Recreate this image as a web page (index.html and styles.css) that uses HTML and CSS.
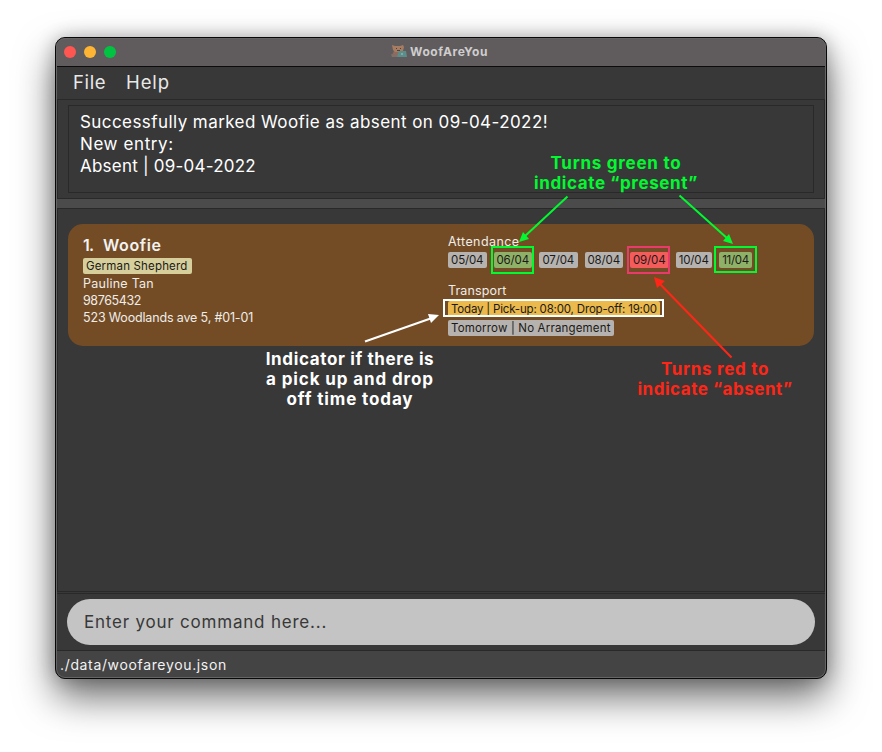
FILE: index.html
```html
<!DOCTYPE html>
<html lang="en">
<head>
<meta charset="utf-8">
<title>WoofAreYou</title>
<link rel="stylesheet" href="styles.css">
</head>
<body>
<main class="window">
  <header class="titlebar">
    <span class="light close"></span><span class="light minimise"></span><span class="light maximise"></span>
    <div class="title">
      <svg class="logo" width="16" height="14" viewBox="0 0 16 14">
        <path d="M3 7h5l1 5H3L1 11z" fill="#8f6b5d"/>
        <path d="M1 1l3 1h5l3-1 1 2-1 4-3 1H4L2 6z" fill="#a67c63"/>
        <path d="M0 10l3 1 3-1v3H1z" fill="#81706a"/>
        <path d="M5 4h1v1H5zM9 4h1v1H9zM6 6h3v1H6z" fill="#4d4140"/>
        <path d="M8 7h7l1 6H6z" fill="#5b8d8b"/>
        <path d="M10 9h2v2h-2z" fill="#80aaa6"/>
      </svg>
      <span class="t-title">WoofAreYou</span>
    </div>
  </header>
  <nav class="menu"><span class="t-file">File</span><span class="t-help">Help</span></nav>
  <section class="result-pane">
    <div class="result">
      <div class="t-success">Successfully marked Woofie as absent on 09-04-2022!</div>
      <div class="t-entry">New entry:</div>
      <div class="t-absent">Absent | 09-04-2022</div>
    </div>
  </section>
  <div class="divider"></div>
  <section class="list">
    <article class="card">
      <div class="pet">
        <h1><span class="t-num">1.</span><span class="t-name">Woofie</span></h1>
        <div class="chip breed">German Shepherd</div>
        <div class="line t-owner">Pauline Tan</div>
        <div class="line t-phone">98765432</div>
        <div class="line t-address">523 Woodlands ave 5, #01-01</div>
      </div>
      <div class="schedule">
        <div class="label t-attendance">Attendance</div>
        <div class="days">
          <span class="chip day">05/04</span><span class="chip day present">06/04</span><span class="chip day">07/04</span><span class="chip day">08/04</span><span class="chip day missed">09/04</span><span class="chip day d10">10/04</span><span class="chip day present d11">11/04</span>
        </div>
        <div class="label transport">Transport</div>
        <div class="chip today">Today | Pick-up: 08:00, Drop-off: 19:00</div>
        <div class="chip tomorrow">Tomorrow | No Arrangement</div>
      </div>
    </article>
  </section>
  <section class="command"><div class="field">Enter your command here...</div></section>
  <footer class="status">./data/woofareyou.json</footer>
</main>

<svg class="overlay" width="882" height="752" viewBox="0 0 882 752" fill="none">
  <g stroke-width="2">
    <path d="M492 247h41v26h-41zM715 247h41v25h-41z" stroke="#00f92f"/>
    <path d="M628 247h41v26h-41z" stroke="#e93a6c"/>
    <path d="M444 300h219v16H444z" stroke="#fff"/>
    <path d="M567.500 196.500L524 237M679.500 195.500L728 239" stroke="#00f92f"/>
    <path d="M731.500 357.500L658 282" stroke="#ff2617"/>
    <path d="M365 341.500L432 318" stroke="#fff"/>
  </g>
  <path d="M519 242L523 232L529 239zM733 244L723 241L729 234z" fill="#00f92f"/>
  <path d="M654 277L665 281L657 288z" fill="#ff2617"/>
  <path d="M439 315L431 323L428 314z" fill="#fff"/>
</svg>
<div class="note note-present"><div class="n1">Turns green to</div><div class="n2">indicate “present”</div></div>
<div class="note note-absent"><div class="n3">Turns red to</div><div class="n4">indicate “absent”</div></div>
<div class="note note-today"><div class="n5">Indicator if there is</div><div class="n6">a pick up and drop</div><div class="n7">off time today</div></div>
</body>
</html>
```
FILE: styles.css
```css
* { box-sizing: border-box; }
body { margin: 0; width: 882px; height: 752px; overflow: hidden; background: #fff; font-family: Inter, "Open Sans", sans-serif; padding: 37px 55px; position: relative; }
.window { width: 772px; height: 642px; border: 1px solid #080808; border-radius: 10px; background: #383838; overflow: hidden; display: flex; flex-direction: column; box-shadow: 0 18px 38px rgba(0,0,0,.58), 0 0 18px rgba(0,0,0,.24); color: #f2f2f2; position: relative; }
.window::after { content: ""; position: absolute; inset: 0; border: 1px solid #656565; border-radius: 9px; pointer-events: none; }
.titlebar { height: 29px; flex: none; display: flex; align-items: center; gap: 8px; padding-left: 8px; background: #605c5d; border-bottom: 1px solid #0c0c0c; }
.light { width: 12px; height: 12px; border-radius: 50%; }
.close { background: #ff5652; }
.minimise { background: #ffb434; }
.maximise { background: #00c441; }
.title { display: flex; align-items: center; gap: 3px; margin-left: 267px; font-size: 12px; font-weight: 700; color: #cfcdce; letter-spacing: .54px; position: relative; top: -1px; }
.menu { height: 33px; flex: none; display: flex; align-items: flex-start; padding-left: 17px; font-size: 18.5px; line-height: 31px; color: #e9e9e9; }
.t-file { width: 53px; letter-spacing: .65px; }
.t-help { letter-spacing: .9px; }
.result-pane { height: 100px; flex: none; margin: -1px 1px 0; border: 1px solid #292929; padding: 5px 10px; }
.result { height: 88px; border: 1px solid #292929; padding: 5px 11px; font-size: 17px; line-height: 22px; color: #fff; white-space: nowrap; }
.t-success { letter-spacing: .43px; }
.t-entry { letter-spacing: .6px; }
.t-absent { letter-spacing: .22px; }
.divider { height: 9px; flex: none; background: #4b4b4b; }
.list { height: 384px; flex: none; margin: 0 1px; border: 1px solid #292929; padding: 15px 10px; }
.card { height: 122px; background: #734c26; border-radius: 15px; display: flex; padding-left: 15px; font-size: 12.5px; white-space: nowrap; }
.pet { width: 365px; padding-top: 11px; }
h1 { margin: 0; font-size: 16px; font-weight: 600; line-height: 20px; display: flex; }
.t-num { width: 20px; letter-spacing: -.8px; }
.t-name { letter-spacing: .6px; }
.chip { height: 16px; width: max-content; border-radius: 2px; background: #b5b2af; color: #1c1a18; font-size: 11.5px; line-height: 16px; }
.breed { margin: 3px 0 1px; width: 109px; padding-left: 3px; background: #d6cf9c; letter-spacing: .17px; }
.line { height: 17px; line-height: 17px; color: #f0ece8; }
.t-owner { letter-spacing: .25px; }
.t-phone { letter-spacing: -.38px; }
.t-address { letter-spacing: -.16px; }
.schedule { padding-top: 9px; }
.label { height: 17px; line-height: 17px; color: #f0ece8; }
.t-attendance { letter-spacing: .42px; }
.days { display: flex; gap: 7px; margin-top: 2px; }
.day { width: 38.5px; text-align: center; letter-spacing: -.15px; }
.present { background: #8fb167; }
.missed { background: #f45b5b; }
.d10 { width: 36.5px; }
.d11 { width: 33px; letter-spacing: -.35px; }
.transport { margin-top: 14px; letter-spacing: .15px; }
.today { margin-top: 2px; width: 212px; padding-left: 3px; background: #ebb94c; letter-spacing: -.18px; }
.tomorrow { margin-top: 3px; width: 166px; padding-left: 3px; letter-spacing: .17px; }
.command { height: 57px; flex: none; margin: 1px 1px 0; border-top: 1px solid #292929; padding: 5px 10px; }
.field { height: 46px; border-radius: 23px; background: #c4c4c4; padding-left: 17px; font-size: 17px; line-height: 46px; color: #383838; letter-spacing: .79px; }
.status { flex: 1; margin: 0 1px 1px; background: #444; border-top: 1px solid #292929; padding-left: 3px; font-size: 14px; line-height: 27px; letter-spacing: .65px; }
.overlay { position: absolute; left: 0; top: 0; }
.note { position: absolute; text-align: center; font-size: 17px; font-weight: 700; line-height: 20px; white-space: nowrap; }
.note-present { left: 534px; top: 153px; width: 164px; color: #00f92f; }
.note-absent { left: 637px; top: 359px; width: 156px; color: #ff2617; }
.note-today { left: 265px; top: 349px; width: 170px; color: #fff; }
.n1 { letter-spacing: .75px; }
.n2 { letter-spacing: .6px; }
.n3 { letter-spacing: .7px; }
.n4 { letter-spacing: .52px; }
.n5 { letter-spacing: .63px; }
.n6 { letter-spacing: .88px; }
.n7 { letter-spacing: .87px; }
```
